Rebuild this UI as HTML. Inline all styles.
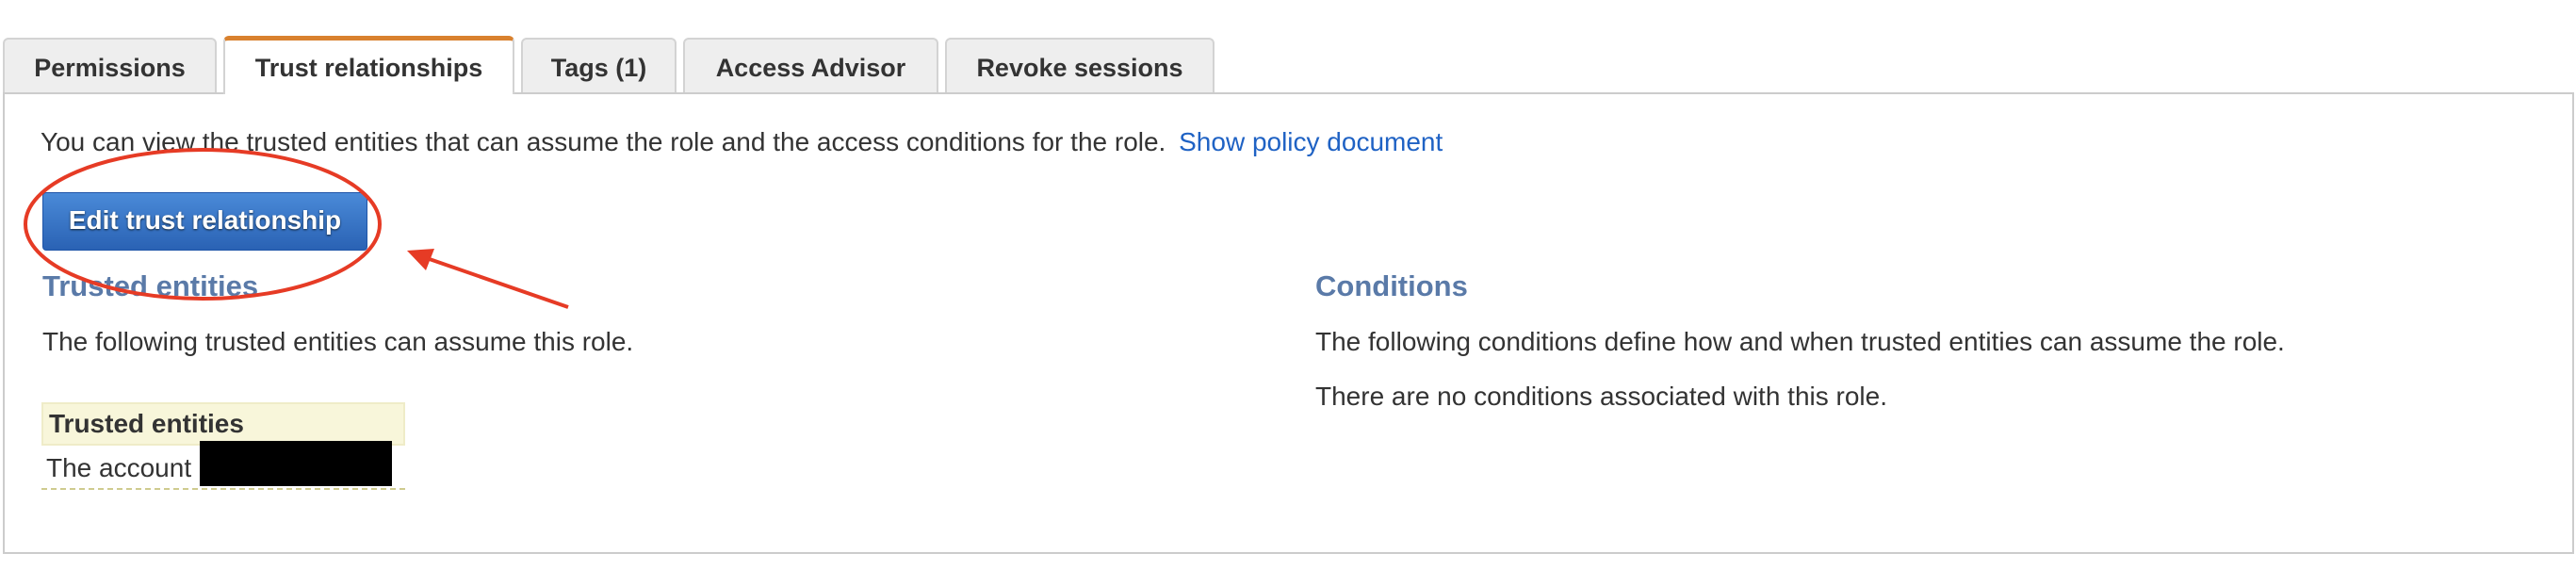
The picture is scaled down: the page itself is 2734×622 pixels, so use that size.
<!DOCTYPE html>
<html><head><style>
html,body{margin:0;padding:0;background:#fff;width:2734px;height:622px;overflow:hidden;font-family:"Liberation Sans",Arial,sans-serif;}
.tab{position:absolute;top:40px;height:58px;background:#eee;border:2px solid #d3d3d3;border-bottom:none;border-radius:6px 6px 0 0;font-weight:bold;font-size:27px;color:#333;box-sizing:border-box;text-align:center;line-height:60px;}
.active{background:#fff;border-top:5px solid #d9812e;height:62px;line-height:58px;z-index:2;}
.panel{position:absolute;left:3px;top:98px;width:2729px;height:490px;border:2px solid #ccc;box-sizing:border-box;}
.t{position:absolute;font-size:28px;color:#333;white-space:nowrap;}
.h{position:absolute;font-size:31px;font-weight:bold;color:#5a7aa8;white-space:nowrap;}
</style></head><body>
<div class="tab" style="left:3px;width:227px;">Permissions</div>
<div class="tab active" style="left:237px;width:309px;top:38px;">Trust relationships</div>
<div class="tab" style="left:553px;width:165px;">Tags (1)</div>
<div class="tab" style="left:725px;width:271px;">Access Advisor</div>
<div class="tab" style="left:1003px;width:286px;">Revoke sessions</div>
<div class="panel"></div>
<div class="t" style="left:43px;top:135px;">You can view the trusted entities that can assume the role and the access conditions for the role. <span style="color:#1f62c4;margin-left:6px">Show policy document</span></div>
<div style="position:absolute;left:45px;top:204px;width:345px;height:62px;border-radius:4px;background:linear-gradient(#4a8ad8,#2a62b4);border:1px solid #1f55a8;box-sizing:border-box;color:#fff;font-weight:bold;font-size:28px;line-height:58px;text-align:center;text-shadow:0 1px 2px #123;">Edit trust relationship</div>
<div class="h" style="left:45px;top:286px;">Trusted entities</div>
<div class="h" style="left:1396px;top:286px;">Conditions</div>
<div class="t" style="left:45px;top:347px;">The following trusted entities can assume this role.</div>
<div class="t" style="left:1396px;top:347px;">The following conditions define how and when trusted entities can assume the role.</div>
<div class="t" style="left:1396px;top:405px;">There are no conditions associated with this role.</div>
<div style="position:absolute;left:44px;top:427px;width:386px;height:46px;background:#f8f6da;border:2px solid #efecc8;box-sizing:border-box;"></div>
<div class="t" style="left:52px;top:434px;font-weight:bold;">Trusted entities</div>
<div class="t" style="left:49px;top:481px;">The account</div>
<div style="position:absolute;left:212px;top:468px;width:204px;height:48px;background:#000;"></div>
<div style="position:absolute;left:44px;top:518px;width:386px;border-top:2px dashed #cfcb8f;"></div>
<svg style="position:absolute;left:0;top:0" width="2734" height="622">
<ellipse cx="215" cy="238" rx="188" ry="79" fill="none" stroke="#e63b25" stroke-width="4"/>
<line x1="603" y1="326" x2="450" y2="273" stroke="#e63b25" stroke-width="4"/>
<polygon points="432,266 461,264 452,287" fill="#e63b25"/>
</svg>
</body></html>
